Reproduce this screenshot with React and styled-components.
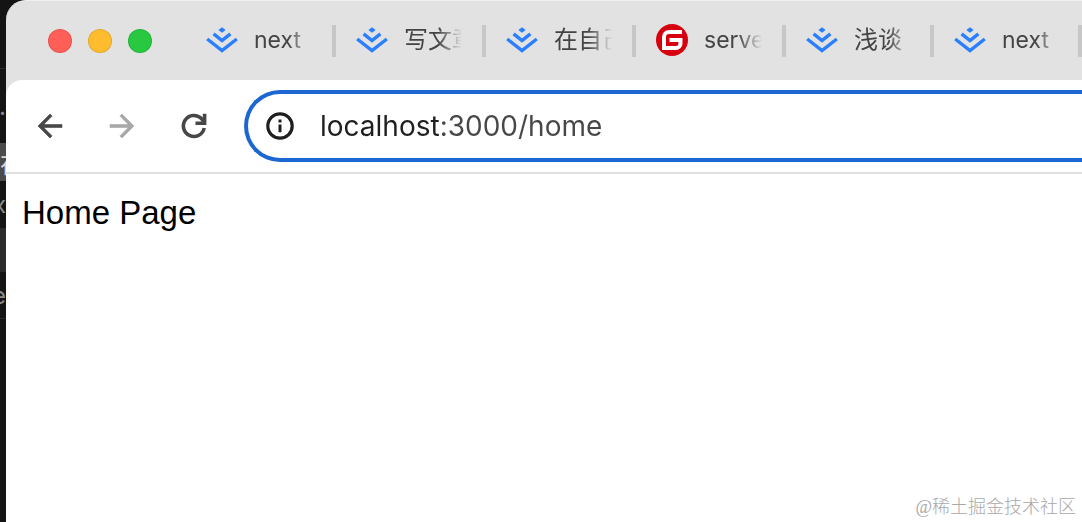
import styled, { createGlobalStyle } from "styled-components";
import { useState } from "react";

const tabs = [
  { icon: "juejin", title: "next", lang: "en", width: 150 },
  { icon: "juejin", title: "写文章", lang: "zh", width: 150 },
  { icon: "juejin", title: "在自己", lang: "zh", width: 150 },
  { icon: "gitee", title: "server", lang: "en", width: 150 },
  { icon: "juejin", title: "浅谈", lang: "zh", width: 148 },
  { icon: "juejin", title: "next", lang: "en", width: 148 },
];

const JuejinIcon = () => (
  <svg width="32" height="32" viewBox="0 0 32 32" fill="none" stroke="#2a7fff" strokeWidth="3.4">
    <path d="M16 3.2l3.6 2.8L16 8.8 12.4 6z" fill="#2a7fff" stroke="none" />
    <path d="M7.6 9.9L16 16.5l8.4-6.6" />
    <path d="M1.2 15L16 26.5 30.8 15" />
  </svg>
);

const GiteeIcon = () => (
  <svg width="32" height="32" viewBox="0 0 32 32" fill="none">
    <circle cx="16" cy="16" r="16" fill="#d7000f" />
    <path d="M26 8H13a5 5 0 0 0-5 5v11h12a4.5 4.5 0 0 0 4.5-4.5V16H13.5" stroke="#fff" strokeWidth="4" />
  </svg>
);

const App = () => {
  const [url, setUrl] = useState("localhost:3000/home");
  return (
    <>
      <GlobalStyle />
      <Desktop>
        <EditorEdge aria-hidden="true">
          <EdgeRow $height={68} />
          <EdgeRow $height={75} $line>.</EdgeRow>
          <EdgeRow $height={38} $bg="#4b4b4b" $color="#d8d8d8" $align="flex-start">在</EdgeRow>
          <EdgeRow $height={47}>x</EdgeRow>
          <EdgeRow $height={44} $bg="#2b2b2e" />
          <EdgeRow $height={46}>e</EdgeRow>
          <EdgeRow $height={205} $line />
        </EditorEdge>
        <Window>
          <TabBar>
            <Lights>
              <Light $color="#ff5f57" aria-label="Close" />
              <Light $color="#febc2e" aria-label="Minimize" />
              <Light $color="#28c840" aria-label="Zoom" />
            </Lights>
            {tabs.map((tab, i) => (
              <Tab key={i} $width={tab.width}>
                {tab.icon === "gitee" ? <GiteeIcon /> : <JuejinIcon />}
                <TabTitle lang={tab.lang}>{tab.title}</TabTitle>
              </Tab>
            ))}
          </TabBar>
          <Toolbar>
            <IconButton aria-label="Back">
              <ArrowSvg width="36" height="36" viewBox="0 0 24 24">
                <path d="M20 11H7.83l5.59-5.59L12 4l-8 8 8 8 1.41-1.41L7.83 13H20v-2z" />
              </ArrowSvg>
            </IconButton>
            <IconButton aria-label="Forward" disabled>
              <ArrowSvg width="36" height="36" viewBox="0 0 24 24">
                <path d="M12 4l-1.41 1.41L16.17 11H4v2h12.17l-5.58 5.59L12 20l8-8z" />
              </ArrowSvg>
            </IconButton>
            <ReloadButton aria-label="Reload">
              <svg width="36" height="36" viewBox="0 0 36 36" fill="none" stroke="currentColor" strokeWidth="3.6">
                <path d="M28.2 20A10.5 10.5 0 1 1 25.4 10.6l2.6 3" />
                <path d="M28.6 5.8v9.4H19.5" />
              </svg>
            </ReloadButton>
            <AddressBar>
              <svg width="28" height="28" viewBox="0 0 28 28" fill="none" stroke="#1f1f1f">
                <circle cx="14" cy="14" r="12.2" strokeWidth="3.2" />
                <path d="M14 12.6v7.6M14 7.6v3" strokeWidth="3" />
              </svg>
              <AddressInput aria-label="Address" value={url} onChange={(e) => setUrl(e.target.value)} />
            </AddressBar>
          </Toolbar>
          <Page>
            <PageText>Home Page</PageText>
            <Watermark>@稀土掘金技术社区</Watermark>
          </Page>
        </Window>
      </Desktop>
    </>
  );
};

const GlobalStyle = createGlobalStyle`
  * {
    box-sizing: border-box;
  }
  body {
    margin: 0;
    background: #141414;
    font-family: Inter, "Noto Sans CJK SC", sans-serif;
  }
`;
const Desktop = styled.div`
  display: flex;
  min-height: 100vh;
  overflow: hidden;
`;
const EditorEdge = styled.div`
  width: 6px;
  flex-shrink: 0;
  overflow: hidden;
`;
const EdgeRow = styled.div`
  display: flex;
  align-items: center;
  justify-content: ${(p) => p.$align || "flex-end"};
  height: ${(p) => p.$height}px;
  background: ${(p) => p.$bg || "#141414"};
  color: ${(p) => p.$color || "#8a8a8a"};
  border-top: ${(p) => (p.$line ? "1px solid #2a2a2a" : "none")};
  font-size: 24px;
`;
const Window = styled.div`
  display: flex;
  flex-direction: column;
  flex: 1;
  min-width: 0;
  background: #e2e2e2;
  border-top: 1px solid #f0f0f0;
  border-top-left-radius: 20px;
  overflow: hidden;
`;
const TabBar = styled.div`
  display: flex;
  align-items: center;
  height: 79px;
  overflow: hidden;
`;
const Lights = styled.div`
  display: flex;
  flex-shrink: 0;
  gap: 16px;
  width: 180px;
  padding-left: 42px;
`;
const Light = styled.button`
  width: 24px;
  height: 24px;
  padding: 0;
  border: 1px solid rgba(0, 0, 0, 0.1);
  border-radius: 50%;
  background: ${(p) => p.$color};
`;
const Tab = styled.button`
  display: flex;
  align-items: center;
  flex-shrink: 0;
  gap: 16px;
  width: ${(p) => p.$width}px;
  height: 32px;
  padding: 0 0 2px 20px;
  border: none;
  border-right: 4px solid #c7c7c7;
  background: none;
  svg {
    flex-shrink: 0;
  }
`;
const TabTitle = styled.span`
  width: 60px;
  overflow: hidden;
  white-space: nowrap;
  text-align: left;
  font-family: Inter, "Noto Sans CJK SC", sans-serif;
  font-size: 23px;
  line-height: 32px;
  color: #444;
  mask-image: linear-gradient(to right, #000 34px, transparent 58px);
  &:lang(zh) {
    font-size: 24px;
  }
`;
const Toolbar = styled.div`
  display: flex;
  align-items: center;
  height: 94px;
  padding-left: 26px;
  background: #fff;
  border-bottom: 2px solid #e0e0e0;
  border-top-left-radius: 16px;
`;
const IconButton = styled.button`
  display: flex;
  flex-shrink: 0;
  width: 36px;
  margin-right: 36px;
  padding: 0;
  border: none;
  background: none;
  color: #474747;
  &:disabled {
    color: #a8a8a8;
  }
`;
const ReloadButton = styled(IconButton)`
  margin-right: 32px;
`;
const ArrowSvg = styled.svg`
  fill: currentColor;
  stroke: currentColor;
  stroke-width: 0.4;
`;
const AddressBar = styled.label`
  display: flex;
  align-items: center;
  flex: 1;
  gap: 26px;
  height: 72px;
  padding-left: 18px;
  border: 4px solid #1b66d0;
  border-right: none;
  border-radius: 36px 0 0 36px;
  svg {
    flex-shrink: 0;
  }
`;
// the host is darker than the port and path
const AddressInput = styled.input`
  flex: 1;
  min-width: 0;
  padding: 0;
  border: none;
  outline: none;
  font-family: Inter, sans-serif;
  font-size: 28px;
  line-height: 40px;
  color: transparent;
  caret-color: #1f1f1f;
  background: linear-gradient(to right, #1f1f1f 120px, #474747 120px);
  background-clip: text;
`;
const Page = styled.main`
  display: flex;
  flex-direction: column;
  justify-content: space-between;
  flex: 1;
  padding: 16px 6px 2px 16px;
  background: #fff;
`;
const PageText = styled.div`
  font-family: "Liberation Sans", Arial, sans-serif;
  font-size: 33px;
  line-height: 46px;
  color: #000;
`;
const Watermark = styled.div`
  align-self: flex-end;
  font-family: "Liberation Serif", "Noto Sans CJK SC", serif;
  font-size: 18px;
  font-weight: 300;
  line-height: 28px;
  color: #a8a8a8;
`;

export default App;
